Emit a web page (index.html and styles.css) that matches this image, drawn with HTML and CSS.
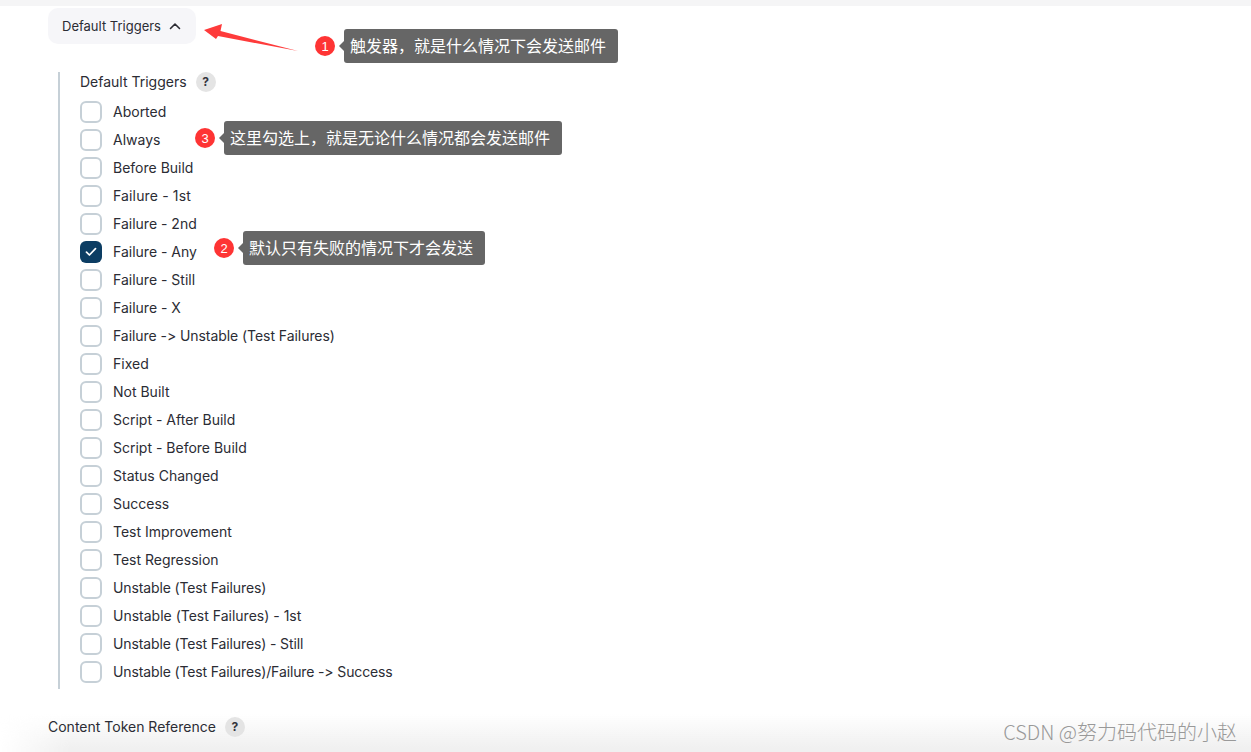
FILE: index.html
```html
<!DOCTYPE html>
<html lang="en">
<head>
<meta charset="utf-8">
<title>Default Triggers</title>
<link rel="stylesheet" href="styles.css">
</head>
<body>
<div class="topbar"></div>
<div class="fade"></div>
<main class="content">
  <button class="toggle" type="button">Default Triggers
    <svg class="chevron" width="12" height="8" viewBox="0 0 12 8"><path d="M1.500 6.500 6 2l4.500 4.500" fill="none" stroke="#2b2b33" stroke-width="1.600" stroke-linecap="round" stroke-linejoin="round"/></svg>
  </button>
  <section class="panel">
    <div class="field-title">Default Triggers <span class="help">?</span></div>
    <ul class="list">
      <li class="row"><span class="box"></span>Aborted</li>
      <li class="row"><span class="box"></span>Always</li>
      <li class="row"><span class="box"></span>Before Build</li>
      <li class="row wide"><span class="box"></span>Failure - 1st</li>
      <li class="row"><span class="box"></span>Failure - 2nd</li>
      <li class="row"><span class="box checked"><svg width="12" height="10" viewBox="0 0 12 10"><path d="M1.500 5.200 4.400 8 10.500 1.600" fill="none" stroke="#fff" stroke-width="1.700" stroke-linecap="round" stroke-linejoin="round"/></svg></span>Failure - Any</li>
      <li class="row"><span class="box"></span>Failure - Still</li>
      <li class="row"><span class="box"></span>Failure - X</li>
      <li class="row tight"><span class="box"></span>Failure -&gt; Unstable (Test Failures)</li>
      <li class="row"><span class="box"></span>Fixed</li>
      <li class="row"><span class="box"></span>Not Built</li>
      <li class="row"><span class="box"></span>Script - After Build</li>
      <li class="row"><span class="box"></span>Script - Before Build</li>
      <li class="row"><span class="box"></span>Status Changed</li>
      <li class="row"><span class="box"></span>Success</li>
      <li class="row"><span class="box"></span>Test Improvement</li>
      <li class="row"><span class="box"></span>Test Regression</li>
      <li class="row tighter"><span class="box"></span>Unstable (Test Failures)</li>
      <li class="row"><span class="box"></span>Unstable (Test Failures) - 1st</li>
      <li class="row tighter"><span class="box"></span>Unstable (Test Failures) - Still</li>
      <li class="row tighter"><span class="box"></span>Unstable (Test Failures)/Failure -&gt; Success</li>
    </ul>
  </section>
  <div class="token">Content Token Reference <span class="help">?</span></div>
</main>

<svg class="arrow" width="100" height="32" viewBox="0 0 100 32"><path d="M0 6 18 0 16.500 7 94 27 14 12 12 15Z" fill="#fe3b3b"/></svg>

<div class="note note-1"><span class="dot">1</span><span class="tip">触发器，就是什么情况下会发送邮件</span></div>
<div class="note note-2"><span class="dot">2</span><span class="tip">默认只有失败的情况下才会发送</span></div>
<div class="note note-3"><span class="dot">3</span><span class="tip">这里勾选上，就是无论什么情况都会发送邮件</span></div>

<div class="watermark">CSDN @努力码代码的小赵</div>
</body>
</html>
```
FILE: styles.css
```css
* { box-sizing: border-box; }
html, body { margin: 0; height: 752px; overflow: hidden; background: #fff; }
body { font-family: Inter, "Noto Sans CJK SC", sans-serif; font-size: 14px; color: #2b2c34; position: relative; font-feature-settings: "calt" 0; }
.topbar { height: 6px; background: #f5f5f6; }
.content { position: relative; padding: 2px 0 0 48px; }
.toggle { display: flex; align-items: center; gap: 8px; height: 36px; width: 148px; padding: 0 0 0 14px; border: 0; border-radius: 10px; background: #f6f6f9; font: inherit; font-size: 13px; color: #2b2c34; }
.panel { margin: 28px 0 0 10px; padding-left: 20px; border-left: 2px solid #c6d0d7; height: 617px; }
.field-title { display: flex; align-items: flex-start; gap: 9px; height: 20px; line-height: 19px; }
.help { display: inline-flex; align-items: center; justify-content: center; width: 20px; height: 20px; border-radius: 50%; background: #e4e4e4; font-size: 12px; font-weight: 700; line-height: 20px; color: #33343c; }
.list { list-style: none; margin: 6px 0 0; padding: 0; }
.row { display: flex; align-items: flex-start; gap: 11px; height: 28px; line-height: 27px; }
.wide { letter-spacing: .15px; }
.tight { letter-spacing: -.06px; }
.tighter { letter-spacing: -.13px; }
.box { display: flex; align-items: center; justify-content: center; width: 22px; height: 22px; margin-top: 3px; border: 2px solid #c6d0d7; border-radius: 6px; background: #fff; }
.box.checked { border: 0; background: #0c3d63; }
.token { display: flex; align-items: flex-start; gap: 9px; height: 20px; line-height: 19px; margin-top: 28px; }
.fade { position: absolute; left: 0; right: 0; top: 714px; height: 38px; background: linear-gradient(to bottom, rgba(240,240,240,0), #f0f0f0 34px); -webkit-mask-image: linear-gradient(to right, transparent 0, #000 70px); mask-image: linear-gradient(to right, transparent 0, #000 70px); }
.arrow { position: absolute; left: 204px; top: 24px; }
.note { position: absolute; display: flex; align-items: center; gap: 9px; }
.note-1 { left: 315px; top: 29px; }
.note-2 { left: 214px; top: 231px; }
.note-3 { left: 195px; top: 121px; }
.dot { display: flex; align-items: center; justify-content: center; width: 20px; height: 20px; border-radius: 50%; background: #fe3434; color: #fff; font: 13px "Liberation Sans", sans-serif; }
.tip { position: relative; display: block; height: 34px; line-height: 32px; padding: 0 12px 0 6px; background: #666; border-radius: 3px; color: #fff; font-family: "Noto Sans CJK SC", sans-serif; font-size: 16px; white-space: nowrap; }
.tip::before { content: ""; position: absolute; left: -5px; top: 12px; border: 5px solid transparent; border-left: 0; border-right-color: #666; }
.watermark { position: absolute; right: 14px; top: 719px; font-family: "Noto Sans CJK SC", sans-serif; font-size: 20px; font-weight: 300; line-height: 26px; color: #999; white-space: nowrap; }
```
